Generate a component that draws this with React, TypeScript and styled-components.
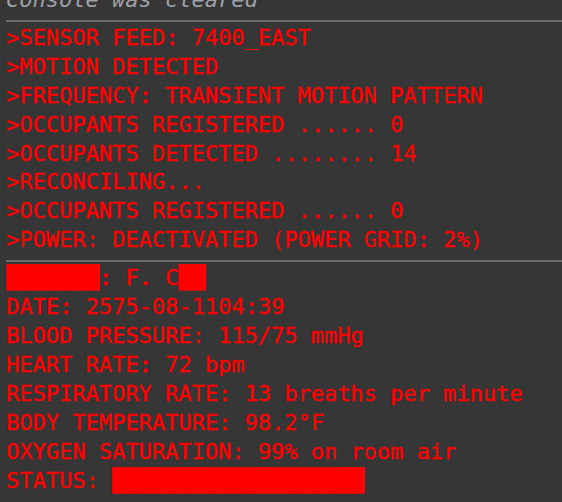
import React from "react";
import styled, { createGlobalStyle } from "styled-components";

const Global = createGlobalStyle`
  html, body {
    margin: 0;
    padding: 0;
    background: #363636;
    overflow: hidden;
  }
`;

const Console = styled.div`
  display: flex;
  flex-direction: column;
  padding-left: 6px;
  margin-top: -16px;
  font-family: "DejaVu Sans Mono", "Liberation Mono", monospace;
  font-size: 22px;
  line-height: 28.9px;
`;

const Entry = styled.div<{ $divided?: boolean }>`
  display: flex;
  flex-direction: column;
  padding: 2px 0 5px 0;
  border-top: ${(p) => (p.$divided ? "2px solid #6b6b6b" : "none")};
`;

const Line = styled.div<{ $muted?: boolean }>`
  white-space: pre;
  color: ${(p) => (p.$muted ? "#9ea2a6" : "#ff0000")};
  font-style: ${(p) => (p.$muted ? "italic" : "normal")};
  -webkit-text-stroke: ${(p) => (p.$muted ? "0" : "0.35px #ff0000")};
`;

const feed = [
  ">SENSOR FEED: 7400_EAST",
  ">MOTION DETECTED",
  ">FREQUENCY: TRANSIENT MOTION PATTERN",
  ">OCCUPANTS REGISTERED ...... 0",
  ">OCCUPANTS DETECTED ........ 14",
  ">RECONCILING...",
  ">OCCUPANTS REGISTERED ...... 0",
  ">POWER: DEACTIVATED (POWER GRID: 2%)",
];

const record = [
  "███████: F. C██",
  "DATE: 2575-08-1104:39",
  "BLOOD PRESSURE: 115/75 mmHg",
  "HEART RATE: 72 bpm",
  "RESPIRATORY RATE: 13 breaths per minute",
  "BODY TEMPERATURE: 98.2°F",
  "OXYGEN SATURATION: 99% on room air",
  "STATUS: ███████████████████",
];

export default function App() {
  return (
    <>
      <Global />
      <Console>
        <Entry>
          <Line $muted>Console was cleared</Line>
        </Entry>
        <Entry $divided>
          {feed.map((t, i) => (
            <Line key={i}>{t}</Line>
          ))}
        </Entry>
        <Entry $divided>
          {record.map((t, i) => (
            <Line key={i}>{t}</Line>
          ))}
        </Entry>
      </Console>
    </>
  );
}
